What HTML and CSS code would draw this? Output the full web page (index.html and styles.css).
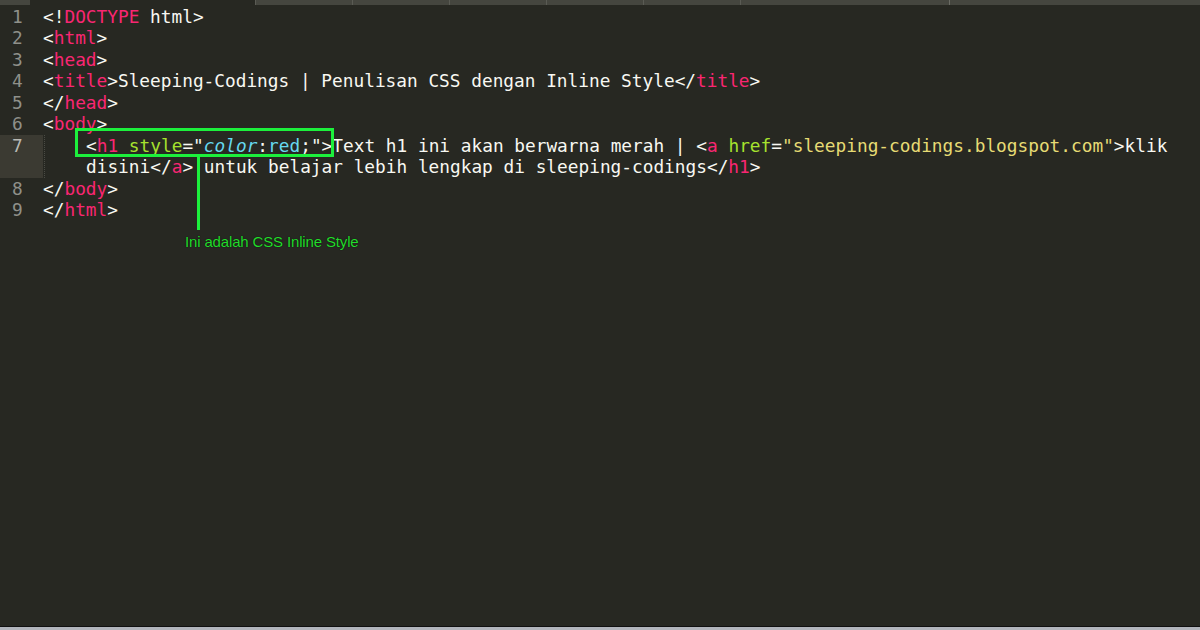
FILE: index.html
```html
<!DOCTYPE html>
<html lang="en">
<head>
    <meta charset="UTF-8">
    <meta name="viewport" content="width=device-width, initial-scale=1.0">
    <link rel="stylesheet" href="styles.css">
</head>
<body>
    <div class="tabbar">
        <div class="tab-gap"></div>
        <div class="tab active"></div>
        <div class="tab"></div>
        <div class="tab"></div>
        <div class="tab"></div>
        <div class="tab"></div>
        <div class="tab"></div>
        <div class="tab wide"></div>
        <div class="tab-end"></div>
    </div>

    <div class="editor">
        <div class="gutter">
            <div class="num">1</div>
            <div class="num">2</div>
            <div class="num">3</div>
            <div class="num">4</div>
            <div class="num">5</div>
            <div class="num">6</div>
            <div class="num current">7</div>
            <div class="num">8</div>
            <div class="num">9</div>
        </div>
        <div class="code">
            <div class="line">&lt;!<span class="tag">DOCTYPE</span> html&gt;</div>
            <div class="line">&lt;<span class="tag">html</span>&gt;</div>
            <div class="line">&lt;<span class="tag">head</span>&gt;</div>
            <div class="line">&lt;<span class="tag">title</span>&gt;Sleeping-Codings | Penulisan CSS dengan Inline Style&lt;/<span class="tag">title</span>&gt;</div>
            <div class="line">&lt;/<span class="tag">head</span>&gt;</div>
            <div class="line">&lt;<span class="tag">body</span>&gt;</div>
            <div class="line indented">
                <span class="guide"></span>
                <div class="wrap">&lt;<span class="tag">h1</span> <span class="attr">style</span>="<span class="prop">color</span>:<span class="val">red</span>;"&gt;Text h1 ini akan berwarna merah | &lt;<span class="tag">a</span> <span class="attr">href</span>=<span class="str">"sleeping-codings.blogspot.com"</span>&gt;klik</div>
                <div class="wrap">disini&lt;/<span class="tag">a</span>&gt; untuk belajar lebih lengkap di sleeping-codings&lt;/<span class="tag">h1</span>&gt;</div>
            </div>
            <div class="line">&lt;/<span class="tag">body</span>&gt;</div>
            <div class="line">&lt;/<span class="tag">html</span>&gt;</div>
        </div>

        <div class="callout-box"></div>
        <div class="callout-stem"></div>
        <div class="callout-label">Ini adalah CSS Inline Style</div>
    </div>

    <div class="statusbar"></div>
</body>
</html>
```

FILE: styles.css
```css
body {
    margin: 0;
    padding: 0;
    width: 1200px;
    height: 630px;
    background-color: #272822;
    display: flex;
    flex-direction: column;
    overflow: hidden;
}

/* tab strip, mostly cut off at the top */
.tabbar {
    height: 5px;
    flex-shrink: 0;
    display: flex;
    background-color: #45463f;
}

.tab-gap {
    width: 30px;
}

.tab {
    width: 96px;
    border-left: 1px solid #5a5b54;
}

.tab.active {
    width: 225px;
    background-color: #272822;
    border-left: none;
}

.tab.wide {
    width: 208px;
}

.tab-end {
    flex: 1;
    border-left: 1px solid #6a6b64;
}

.editor {
    flex: 1;
    display: flex;
    position: relative;
    font-family: "DejaVu Sans Mono", monospace;
    font-size: 17.8px;
    line-height: 21.5px;
    color: #f8f8f2;
    padding-top: 0.5px;
}

.gutter {
    width: 43px;
    color: #8f908a;
}

.num {
    height: 21.5px;
    padding-left: 12px;
}

.num.current {
    height: 43px;
    background-color: #3b3a32;
    color: #b8b8b2;
}

.code {
    flex: 1;
}

.line {
    height: 21.5px;
    white-space: pre;
}

.line.indented {
    height: 43px;
    padding-left: 43px;
    position: relative;
    white-space: normal;
}

.wrap {
    height: 21.5px;
    white-space: pre;
}

.guide {
    position: absolute;
    left: 1px;
    top: 0;
    height: 43px;
    border-left: 1px dotted #4a4b44;
}

.tag {
    color: #f92672;
}

.attr {
    color: #a6e22e;
}

.str {
    color: #e6db74;
}

.prop {
    color: #66d9ef;
    font-style: italic;
}

.val {
    color: #66d9ef;
}

/* green annotation drawn over the code */
.callout-box {
    position: absolute;
    left: 75px;
    top: 123px;
    width: 253px;
    height: 23px;
    border: 3px solid #1cf03c;
}

.callout-stem {
    position: absolute;
    left: 197px;
    top: 152px;
    width: 3px;
    height: 73px;
    background-color: #1cf03c;
}

.callout-label {
    position: absolute;
    left: 185px;
    top: 228px;
    font-family: "Liberation Sans", Arial, sans-serif;
    font-size: 15px;
    line-height: 17px;
    color: #24dc2c;
    text-shadow: 0 0 1px #000;
    letter-spacing: -0.15px;
}

.statusbar {
    height: 3px;
    flex-shrink: 0;
    border-top: 1px solid #111;
    background-color: #b2b6bd;
}
```
